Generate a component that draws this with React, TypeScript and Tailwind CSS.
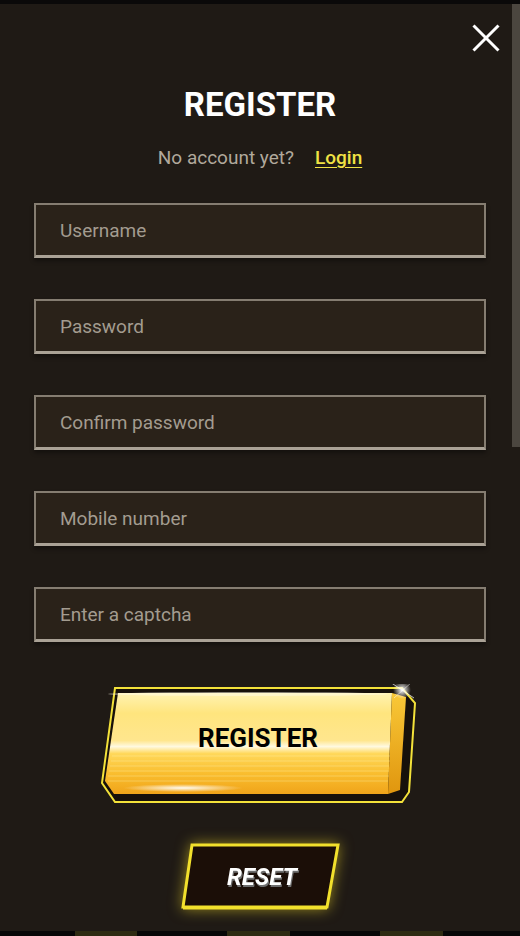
import React from "react";

const fields = ["Username", "Password", "Confirm password", "Mobile number", "Enter a captcha"];

function RegisterButton() {
  return (
    <button className="relative w-[320px] h-[120px] -translate-x-[2px] block">
      <svg className="absolute inset-0" width="320" height="120" viewBox="0 0 320 120">
        <defs>
          <linearGradient id="face" x1="0" y1="0" x2="0" y2="1">
            <stop offset="0" stopColor="#fff3b2" />
            <stop offset="0.2" stopColor="#ffe57e" />
            <stop offset="0.47" stopColor="#ffe68e" />
            <stop offset="0.53" stopColor="#fff9e0" />
            <stop offset="0.6" stopColor="#ffd85a" />
            <stop offset="0.8" stopColor="#f9bd2e" />
            <stop offset="1" stopColor="#f0a41a" />
          </linearGradient>
          <linearGradient id="side" x1="0" y1="0" x2="0" y2="1">
            <stop offset="0" stopColor="#f9c838" />
            <stop offset="1" stopColor="#e0960e" />
          </linearGradient>
          <radialGradient id="glow" cx="0.5" cy="0.5" r="0.5">
            <stop offset="0" stopColor="#ffffff" stopOpacity="0.95" />
            <stop offset="1" stopColor="#ffffff" stopOpacity="0" />
          </radialGradient>
          <radialGradient id="spark" cx="0.5" cy="0.5" r="0.5">
            <stop offset="0" stopColor="#ffffff" stopOpacity="1" />
            <stop offset="1" stopColor="#ffffff" stopOpacity="0" />
          </radialGradient>
        </defs>
        <polygon
          points="17,4 304,4 317,19 311,108 304,118 17,118 4,99"
          fill="#17110b"
          stroke="#f3e23a"
          strokeWidth="2"
        />
        <polygon points="20,9 294,9 290,110 16,110 7,97" fill="url(#face)" />
        <polygon points="294,9 308,13 302,106 290,110" fill="url(#side)" />
        <g stroke="#fff1b0" strokeOpacity="0.35" strokeWidth="1">
          <line x1="14" y1="72" x2="292" y2="72" />
          <line x1="13" y1="77" x2="292" y2="77" />
          <line x1="12" y1="82" x2="291" y2="82" />
          <line x1="11" y1="87" x2="291" y2="87" />
          <line x1="10" y1="92" x2="291" y2="92" />
          <line x1="10" y1="97" x2="290" y2="97" />
        </g>
        <ellipse cx="85" cy="104" rx="60" ry="4" fill="url(#glow)" />
        <ellipse cx="150" cy="10" rx="140" ry="2" fill="#fffbe8" fillOpacity="0.5" />
        <circle cx="304" cy="6" r="9" fill="url(#spark)" />
        <line x1="292" y1="-2" x2="316" y2="14" stroke="#ffffff" strokeOpacity="0.7" strokeWidth="1" />
        <line x1="296" y1="14" x2="314" y2="-2" stroke="#ffffff" strokeOpacity="0.5" strokeWidth="1" />
      </svg>
      <span className="relative flex h-full items-center justify-center pb-[12px] text-[26px] font-bold leading-none text-black">
        REGISTER
      </span>
    </button>
  );
}

function ResetButton() {
  return (
    <button className="relative w-[160px] h-[68px] block translate-x-[1px] drop-shadow-[0_0_7px_rgba(245,220,40,0.55)]">
      <svg className="absolute inset-0" width="160" height="68" viewBox="0 0 160 68">
        <polygon points="11,2 157,2 146,64 2,64" fill="#1b0e07" stroke="#f2e02c" strokeWidth="3" />
        <line x1="2" y1="65" x2="146" y2="65" stroke="#f2e02c" strokeWidth="3" />
      </svg>
      <span className="relative flex h-full items-center justify-center pb-[1px] pl-[2px] text-[24px] font-bold italic leading-none text-white [text-shadow:1px_2px_0_#6e6e6e]">
        RESET
      </span>
    </button>
  );
}

export default function App() {
  return (
    <div className="relative flex h-[936px] w-[520px] flex-col overflow-hidden bg-[#1f1a15] [font-family:Roboto,'Liberation_Sans',sans-serif]">
      <div className="h-[4px] bg-[#0a0909]" />
      <div className="absolute right-0 top-[4px] h-[443px] w-[8px] bg-[#4b463f]" />

      <div className="flex flex-1 flex-col">
        <div className="flex justify-end pr-[20px] pt-[20px]">
          <svg width="28" height="28" viewBox="0 0 28 28">
            <line x1="1.5" y1="1.5" x2="26.5" y2="26.5" stroke="#ffffff" strokeWidth="3" />
            <line x1="26.5" y1="1.5" x2="1.5" y2="26.5" stroke="#ffffff" strokeWidth="3" />
          </svg>
        </div>

        <h1 className="mt-[34px] text-center text-[33px] font-bold leading-[38px] text-white">REGISTER</h1>

        <div className="mt-[22px] flex items-center justify-center gap-[21px] text-[19px] leading-[24px]">
          <span className="text-[#b1a99c]">No account yet?</span>
          <a className="font-medium text-[#efe244] underline underline-offset-[3px]">Login</a>
        </div>

        <div className="mt-[33px] flex flex-col gap-[41px] px-[34px]">
          {fields.map((f) => (
            <input
              key={f}
              readOnly
              placeholder={f}
              className="h-[55px] w-full border-2 border-[#857d71] border-b-[3px] border-b-[#aaa296] bg-[#2a2219] pl-[24px] text-[19px] text-[#a39c90] outline-none placeholder:text-[#a39c90] shadow-[0_3px_4px_rgba(0,0,0,0.35)]"
            />
          ))}
        </div>

        <div className="mt-[42px] flex justify-center">
          <RegisterButton />
        </div>

        <div className="mt-[39px] flex justify-center">
          <ResetButton />
        </div>
      </div>

      <div className="flex h-[5px] bg-[#070707]">
        <div className="ml-[75px] w-[62px] bg-[#2e2b12]" />
        <div className="ml-[90px] w-[63px] bg-[#2e2b12]" />
        <div className="ml-[90px] w-[63px] bg-[#2e2b12]" />
      </div>
    </div>
  );
}
